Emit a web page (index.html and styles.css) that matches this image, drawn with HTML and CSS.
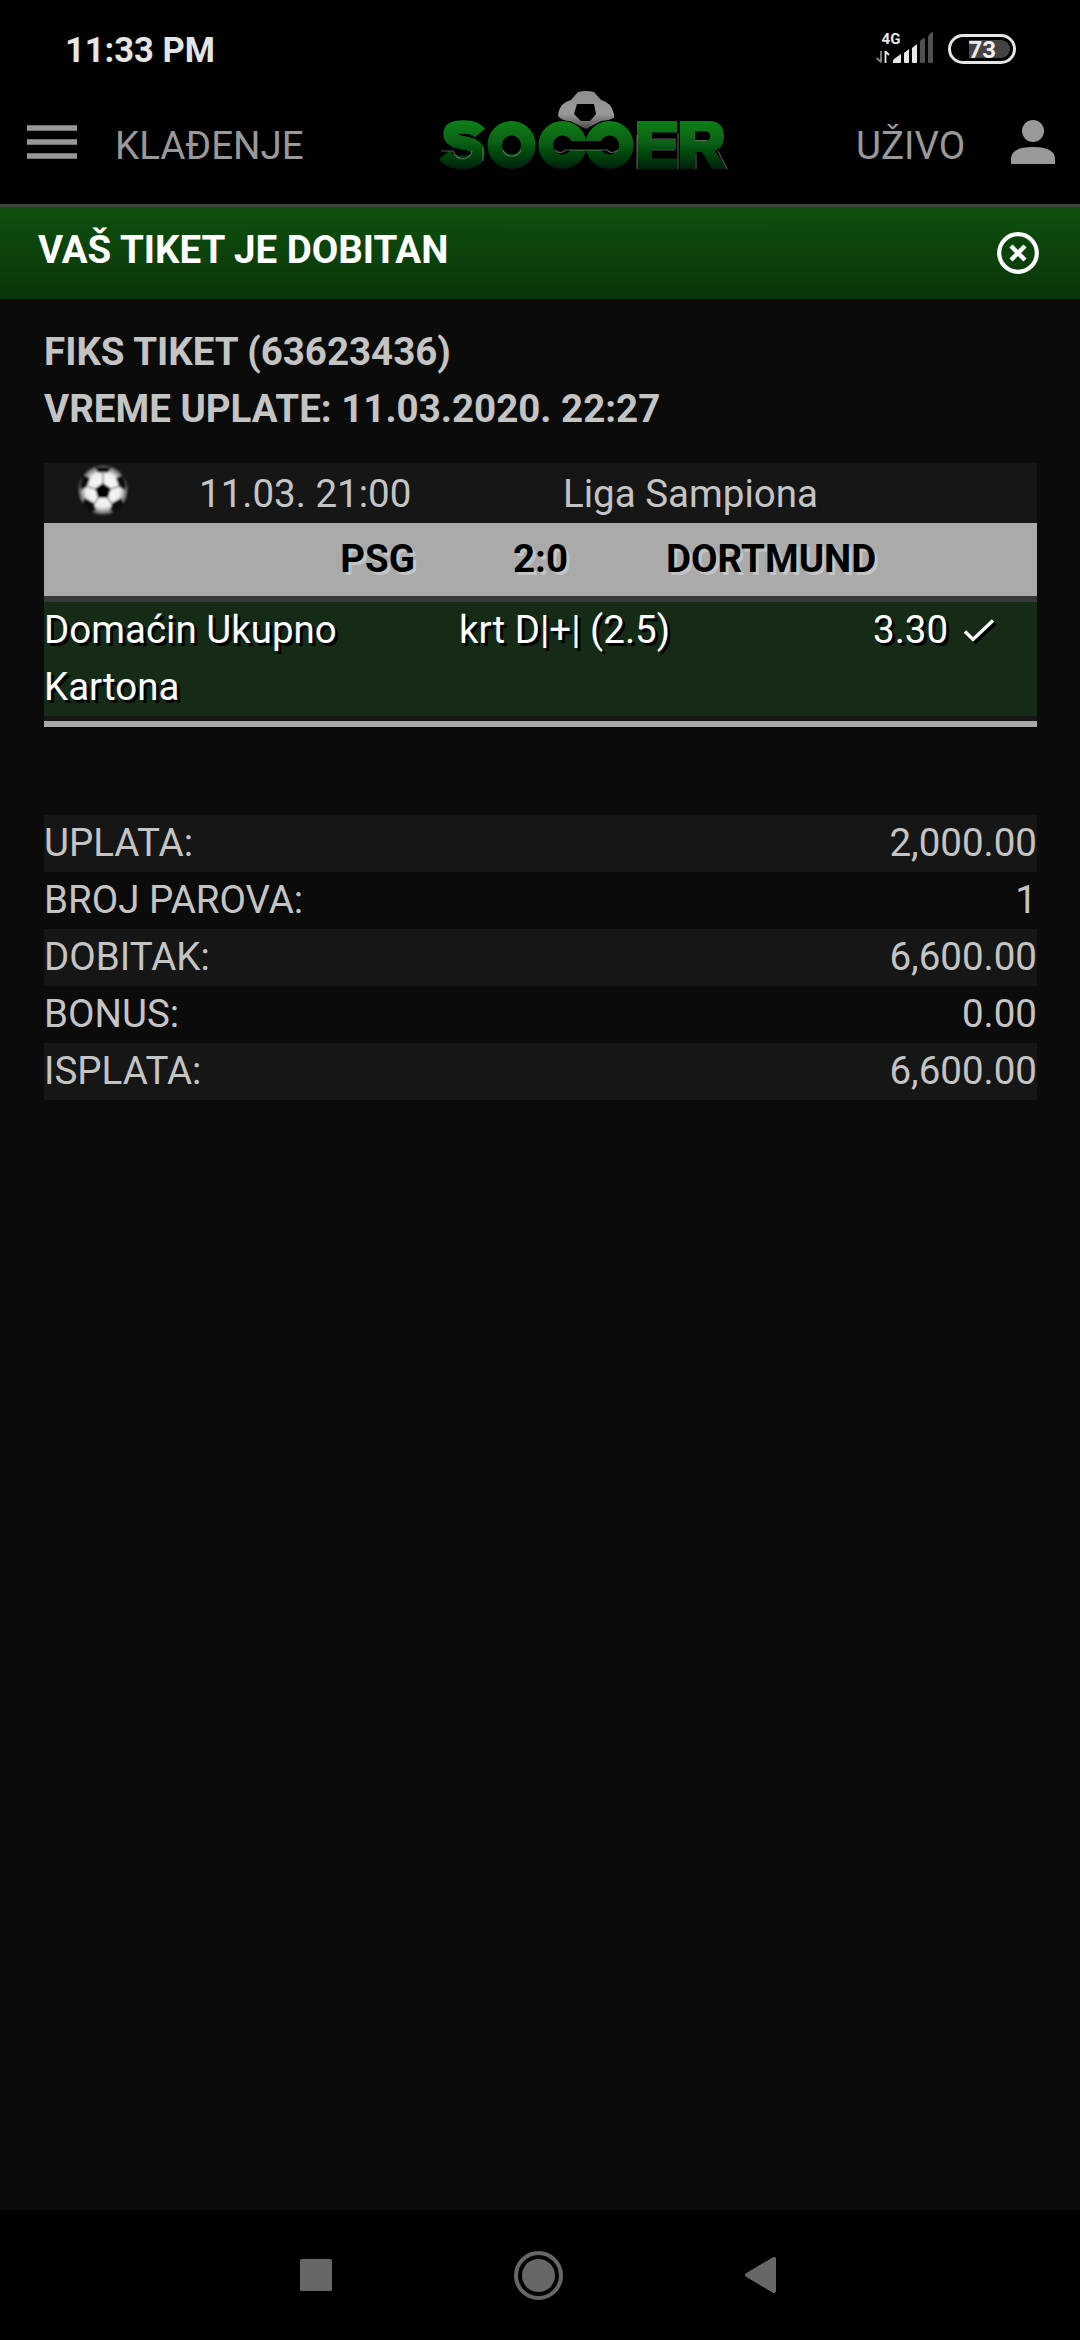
FILE: index.html
```html
<!DOCTYPE html>
<html lang="sr">
<head>
<meta charset="utf-8">
<title>Soccer – Tiket</title>
<link rel="stylesheet" href="styles.css">
</head>
<body>
<div class="status">
  <span class="clock">11:33 PM</span>
  <div class="status-icons">
    <svg class="signal" width="60" height="36" viewBox="0 0 60 36">
      <text class="net" x="5.500" y="13.500" textLength="19">4G</text>
      <path d="M5 21V32.500M5 32L.5 28" stroke="#888" stroke-width="1.800" fill="none"/>
      <path d="M9.500 33V21M9.500 21.500L13 25" stroke="#e8e8e8" stroke-width="1.800" fill="none"/>
      <g fill="#e8e8e8"><path d="M17 33v-2q0-1 1-2l7-5v8q0 1-1 1z"/><path d="M28 23l5-4v13q0 1-1 1h-3q-1 0-1-1z"/><path d="M36 18l5-4v18q0 1-1 1h-3q-1 0-1-1z"/></g>
      <g fill="#505050"><path d="M44 12q0-3 5-4v24q0 1-1 1h-3q-1 0-1-1z"/><path d="M52 7q1-4 5-5v30q0 1-1 1h-3q-1 0-1-1z"/></g>
    </svg>
    <svg class="battery" width="68" height="30" viewBox="0 0 68 30">
      <rect x="1.500" y="1.500" width="65" height="27" rx="13.500" fill="none" stroke="#e5e5e5" stroke-width="3"/>
      <path d="M21 6h32a9 9 0 0 1 0 18H21z" fill="#434343"/>
      <text class="pct" x="20.500" y="24">73</text>
    </svg>
  </div>
</div>
<header class="topbar">
  <svg class="menu" width="50" height="34" viewBox="0 0 50 34"><path d="M0 3h50M0 17h50M0 31h50" stroke="#999" stroke-width="5.500"/></svg>
  <a class="nav-left">KLAĐENJE</a>
  <svg class="logo" width="290" height="84" viewBox="0 0 290 84">
    <defs>
      <linearGradient id="g" gradientUnits="userSpaceOnUse" x1="0" y1="33" x2="0" y2="83"><stop offset="0" stop-color="#0a801a"/><stop offset=".45" stop-color="#076014"/><stop offset="1" stop-color="#021f05"/></linearGradient>
      <linearGradient id="b" x1="0" y1="0" x2="0" y2="1"><stop offset="0" stop-color="#8e8e8e"/><stop offset=".6" stop-color="#999"/><stop offset="1" stop-color="#4a4a4a"/></linearGradient>
      <filter id="soft"><feGaussianBlur stdDeviation=".7"/></filter>
    </defs>
    <g filter="url(#soft)">
    <path d="M138 5q8-2 16 0l7 8q10 2 13 14v4q-6 3-13 3l-15 8-16-8q-8 0-12-5 1-13 13-16z" fill="url(#b)"/>
    <path d="M137 17h17l2 10-6 7h-9l-7-7z" fill="#000"/>
    <g fill="none" stroke="url(#g)">
      <path d="M40 46Q35 40 24 40Q10 40 10 47Q10 54 24 56Q38 58 38 66Q38 75.500 23 75.500Q10 75.500 4 68" stroke-width="13.500"/>
      <circle cx="71.500" cy="58" r="16.800" stroke-width="14.500"/>
      <circle cx="122.500" cy="58" r="16.800" stroke-width="14.500"/>
      <circle cx="169.500" cy="58" r="16.800" stroke-width="14.500"/>
      <path d="M123 58.500h46" stroke="#000" stroke-width="9"/>
    </g>
    <path d="M197 34h40v11.500h-25v7h24v10h-24v9h25v11h-40zM240 34h29q15 0 15 16 0 10-9 14l12 18h-15l-10-17h-7v17h-15zM255 44.500v9h11q4 0 4-4.500t-4-4.500z" fill="url(#g)" fill-rule="evenodd"/>
    <path d="M1 64h12q3 8 11 8 8-2 8-9M63 63q2 6 9 6t9-6M115 63q5 5 11 0h41q5 5 11 0M197 48v34M212 63h23M212 52h24M238 46v36M256 66v16M278 64l9 18M43 60v14M255 53.500h12" fill="none" stroke="#888" stroke-width="1.100" opacity=".65"/>
    </g>
  </svg>
  <a class="nav-right">UŽIVO</a>
  <svg class="user" width="44" height="44" viewBox="0 0 44 44"><circle cx="22" cy="11" r="11" fill="#999"/><path d="M0 44v-5q0-12 22-12t22 12v5z" fill="#999"/></svg>
</header>
<div class="banner">
  <span>VAŠ TIKET JE DOBITAN</span>
  <svg width="42" height="42" viewBox="0 0 42 42" fill="none" stroke="#fff"><circle cx="21" cy="21" r="18.800" stroke-width="4.200"/><path d="M14 14l14 14M28 14L14 28" stroke-width="4.400"/></svg>
</div>
<main>
  <div class="ticket-head"><div>FIKS TIKET (63623436)</div><div>VREME UPLATE: 11.03.2020. 22:27</div></div>
  <section class="match">
    <div class="info">
      <svg class="ball" width="52" height="52" viewBox="0 0 52 52">
        <defs><radialGradient id="s"><stop offset="0" stop-color="#fff"/><stop offset=".7" stop-color="#eee"/><stop offset="1" stop-color="#555"/></radialGradient><filter id="f"><feGaussianBlur stdDeviation=".9"/></filter><clipPath id="c"><circle cx="26" cy="26" r="25"/></clipPath></defs>
        <g filter="url(#f)"><circle cx="26" cy="26" r="24.500" fill="url(#s)"/>
        <g clip-path="url(#c)"><path d="M26 19l8 5.500-3 9.500h-10l-3-9.500z" fill="#000"/><path d="M18 3h16l-3 5.500H21zM3 21l3-10 7 3-3 9-6 3zM49 21l-3-10-7 3 3 9 6 3zM8 34l9 5 2 7-5 3-9-9zM44 34l-9 5-2 7 5 3 9-9z" fill="#0a0a0a"/>
        <path d="M26 8v11M9 22l9 3M43 22l-9 3M17 40l5-7M35 40l-5-7" stroke="#888" stroke-width="1.500"/></g></g>
      </svg>
      <span class="date">11.03. 21:00</span><span class="league">Liga Sampiona</span>
    </div>
    <div class="teams"><span class="home">PSG</span><span class="score">2:0</span><span class="away">DORTMUND</span></div>
    <div class="bet">
      <span class="bet-name">Domaćin Ukupno Kartona</span><span class="pick">krt D|+| (2.5)</span>
      <span class="odds">3.30</span>
      <svg class="check" width="36" height="30" viewBox="0 0 36 30" fill="none" stroke-width="3.400"><path d="M5.500 17l8 8L33.500 6" stroke="#000"/><path d="M3 14.500l8 8L31 3.500" stroke="#fff"/></svg>
    </div>
  </section>
  <dl class="totals">
    <div><dt>UPLATA:</dt><dd>2,000.00</dd></div>
    <div><dt>BROJ PAROVA:</dt><dd>1</dd></div>
    <div><dt>DOBITAK:</dt><dd>6,600.00</dd></div>
    <div><dt>BONUS:</dt><dd>0.00</dd></div>
    <div><dt>ISPLATA:</dt><dd>6,600.00</dd></div>
  </dl>
</main>
<footer class="sysnav">
  <svg width="32" height="32" viewBox="0 0 32 32"><rect width="32" height="32" rx="1.500" fill="#676767"/></svg>
  <svg width="49" height="49" viewBox="0 0 49 49"><circle cx="24.500" cy="24.500" r="22.500" fill="none" stroke="#676767" stroke-width="4"/><circle cx="24.500" cy="24.500" r="16.500" fill="#676767"/></svg>
  <svg width="31" height="36" viewBox="0 0 31 36"><path d="M29 2v32L2 18z" fill="#676767" stroke="#676767" stroke-width="4" stroke-linejoin="round"/></svg>
</footer>
</body>
</html>
```
FILE: styles.css
```css
* { box-sizing: border-box; }
body { margin: 0; width: 1080px; height: 2340px; display: flex; flex-direction: column; overflow: hidden; background: #0b0b0b; color: #c4c4c4; font: 38.5px/57px Roboto, sans-serif; }
svg { display: block; flex: none; }
span, a, dt, dd { white-space: nowrap; }
.status { height: 96px; background: #000; display: flex; justify-content: space-between; padding: 30px 64px 0 65px; }
.clock { color: #e5e5e5; font-size: 34.5px; font-weight: 700; line-height: 40px; }
.status-icons { display: flex; gap: 12px; }
.battery { margin-top: 4px; }
.net { font: 700 15px Roboto, sans-serif; fill: #e8e8e8; }
.pct { font: 700 24px Roboto, sans-serif; fill: #eee; }
.topbar { height: 111px; background: #000; border-bottom: 3px solid #424242; display: flex; align-items: flex-start; padding: 0 25px 0 27px; color: #999; }
.menu { margin-top: 29px; }
.nav-left { margin: 21px 0 0 38px; width: 325px; }
.logo { margin-top: -9px; }
.nav-right { margin: 21px 0 0 126px; width: 155px; }
.user { margin-top: 24px; }
.banner { height: 93px; display: flex; justify-content: space-between; padding: 14px 41px 0 38px; background: linear-gradient(#0e500e, #0a350a); border-bottom: 1px solid #061406; color: #fff; font-weight: 700; }
.banner svg { margin-top: 11px; }
main { flex: 1; padding: 23px 43px 0 44px; }
.ticket-head { font-weight: 700; }
.match { margin-top: 26px; background: #161616; border-bottom: 6px solid #aaa8ab; padding-bottom: 5px; }
.info { height: 60px; display: flex; padding: 2px 0 0 33px; }
.ball { margin-top: -1px; }
.date { margin-left: 70px; width: 364px; }
.teams { height: 79px; padding-top: 7px; display: flex; background: #aaa; border-bottom: 6px solid #383838; color: #000; font-weight: 700; text-shadow: 3px 3px 0 #c4c4c4; }
.home { width: 371px; text-align: right; }
.score { width: 251px; text-align: center; }
.bet { height: 114px; display: flex; background: #162b16; color: #fff; text-shadow: 3px 3px 0 #000; }
.bet span { margin-top: -1px; }
.bet .bet-name { width: 415px; padding-right: 90px; white-space: normal; }
.pick { width: 414px; }
.check { margin: 15px 0 0 14px; }
.totals { margin: 88px 0 0; }
.totals div { display: flex; justify-content: space-between; height: 57px; line-height: 55px; }
.totals div:nth-child(odd) { background: #161616; }
.totals dd { margin: 0; }
.sysnav { height: 130px; background: #000; display: flex; align-items: center; padding: 0 304px 0 300px; justify-content: space-between; }
```
